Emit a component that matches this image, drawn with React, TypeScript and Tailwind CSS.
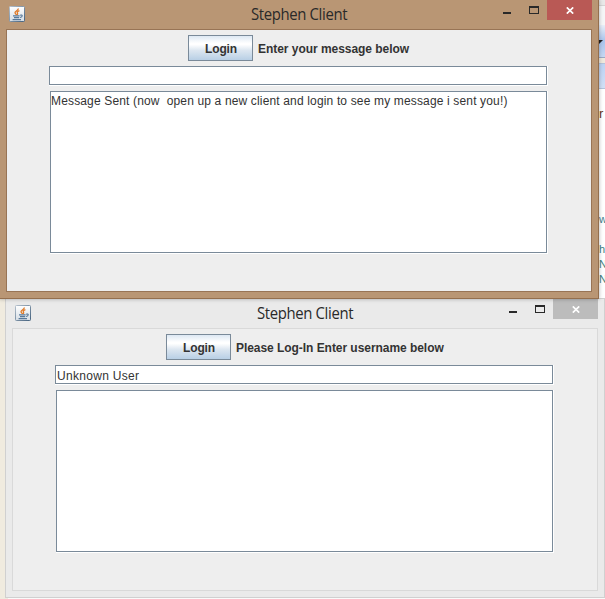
import React from "react";

function JavaIcon() {
  return (
    <svg width="16" height="16" viewBox="0 0 16 16" shapeRendering="geometricPrecision">
      <defs>
        <linearGradient id="tile" x1="0" y1="0" x2="0" y2="1">
          <stop offset="0" stopColor="#ffffff" />
          <stop offset="1" stopColor="#d5dde5" />
        </linearGradient>
        <linearGradient id="edge" x1="0" y1="0" x2="1" y2="1">
          <stop offset="0" stopColor="#b4c0cc" />
          <stop offset="1" stopColor="#46637f" />
        </linearGradient>
      </defs>
      <rect x="0.5" y="0.5" width="15" height="15" rx="0.8" fill="url(#tile)" stroke="url(#edge)" />
      <path d="M9.4 2.6C9.4 4.4 6 5 6 6.8C6 7.8 7.4 8.2 7.4 9M10.4 4.6C8.4 5.4 7.8 6.2 8.5 7.1C8.9 7.8 8.6 8.4 8.2 9" fill="none" stroke="#e07a28" strokeWidth="1.3" />
      <path d="M4 9.9H10.6M5 11.7H10.2M3.6 13.6H12" fill="none" stroke="#58799a" strokeWidth="1.2" />
      <path d="M11 9.2C14 8.4 14 10.9 11 11.5" fill="none" stroke="#58799a" strokeWidth="1.1" />
    </svg>
  );
}

type ClientProps = {
  active: boolean;
  prompt: string;
  promptClass: string;
  rowClass: string;
  user: string;
  message: string;
};

function ClientWindow({ active, prompt, promptClass, rowClass, user, message }: ClientProps) {
  return (
    <section
      className={`flex h-[300px] w-[600px] flex-col border px-[6px] pb-[6px] ${
        active ? "border-[#946f4e] bg-[#b99674] shadow-[0_0_4px_rgba(0,0,0,0.3)]" : "border-[#d0d0d0] bg-[#eaeaea]"
      }`}
    >
      <header className="flex h-[29px] shrink-0 items-start">
        <div className="ml-[3px] mt-[6px] h-4 w-4"><JavaIcon /></div>
        <h1 className="ml-[226px] mt-[4px] w-[120px] origin-left scale-x-[0.93] whitespace-nowrap font-['Open_Sans',sans-serif] text-[16px] leading-[20px] tracking-[-0.38px] text-[#292929]">
          Stephen Client
        </h1>
        <div className="ml-auto flex items-start">
          <span className="mr-[18px] mt-[12px] h-[2px] w-[8px] bg-[#292929]" />
          <span className="mr-[8px] mt-[6px] h-[8px] w-[10px] border border-t-2 border-[#292929]" />
          <span className={`flex h-[20px] w-[45px] justify-center pl-px pt-[7px] ${active ? "bg-[#b95955]" : "bg-[#bcbcbc]"}`}>
            <svg width="8" height="7" viewBox="0 0 8 7">
              <path d="M0.8 0.4L7.2 6.6M7.2 0.4L0.8 6.6" stroke="white" strokeWidth="1.7" />
            </svg>
          </span>
        </div>
      </header>
      <main
        className={`flex min-h-0 flex-1 flex-col border bg-[#eeeeee] pt-[5px] font-['Liberation_Sans',Arial,sans-serif] text-[12px] text-[#333333] ${
          active ? "border-[#987455]" : "border-[#d9d9d9]"
        }`}
      >
        <div className={`flex h-[26px] shrink-0 items-center gap-[5px] font-bold ${rowClass}`}>
          <button className="h-[26px] w-[65px] border border-[#7a8a99] bg-[linear-gradient(#dde8f3_0%,#ffffff_30%,#ffffff_36%,#dce6f0_60%,#b8cfe5_100%)] pl-px pt-px font-bold tracking-[-0.1px]">
            Login
          </button>
          <span className={`whitespace-nowrap pt-px ${promptClass}`}>{prompt}</span>
        </div>
        <div className="ml-[42px] mt-[5px] h-[20px] w-[499px] shrink-0 border-b border-r border-white">
          <div className="h-[19px] w-[498px] border border-[#7a8a99] bg-white pl-px pt-px leading-[18px] tracking-[0.3px]">{user}</div>
        </div>
        <div className="ml-[43px] mt-[5px] h-[163px] w-[498px] shrink-0 border-b border-r border-white">
          <div className="h-[162px] w-[497px] whitespace-pre border border-[#7a8a99] bg-white pt-[2px] leading-[15px] tracking-[0.154px]">{message}</div>
        </div>
      </main>
    </section>
  );
}

export default function App() {
  return (
    <div className="relative h-[599px] w-[605px] overflow-hidden bg-[#f0ebdf]">
      <div className="absolute left-[599px] top-0 h-[298px] w-[6px] overflow-hidden bg-white font-['Liberation_Sans',Arial,sans-serif] text-[11px]">
        <div className="h-[5px] bg-[#e9e9e9]" />
        <div className="h-[20px] border-t border-[#d5d5d5] bg-[#f5f6f7]" />
        <div className="h-[33px] border-b border-[#9aa9c4] bg-gradient-to-b from-[#e9eff8] via-[#a9c4ec] to-[#c6d8f3]">
          <svg width="6" height="32"><path d="M0 15H4L0 19Z" fill="#222222" /></svg>
        </div>
        <div className="h-[5px] bg-[#eee9dd]" />
        <div className="h-[26px] border-y border-[#b4c3db] bg-gradient-to-b from-[#bdd3f4] to-[#d2e0f6]" />
        <div className="mt-[18px] h-[14px] text-[13px] leading-[14px] text-[#683619]">r</div>
        <div className="mt-[91px] h-[15px] leading-[15px] text-[#3f7f8f]">w</div>
        <div className="mt-[15px] h-[15px] leading-[15px] text-[#3f7f7f]">h</div>
        <div className="h-[15px] leading-[15px] text-[#3f7f7f]">N</div>
        <div className="h-[15px] leading-[15px] text-[#3f7f7f]">N</div>
      </div>
      <div className="absolute left-[8px] top-[598px] h-px w-[597px] bg-[#fafafa]" />
      <div className="absolute left-[5px] top-[298px]">
        <ClientWindow active={false} rowClass="pl-[153px]" promptClass="tracking-[-0.05px]" prompt="Please Log-In Enter username below" user="Unknown User" message="" />
      </div>
      <div className="absolute -left-px -top-px">
        <ClientWindow active rowClass="pl-[181px]" promptClass="tracking-[-0.04px]" prompt="Enter your message below" user="" message="Message Sent (now  open up a new client and login to see my message i sent you!)" />
      </div>
    </div>
  );
}
